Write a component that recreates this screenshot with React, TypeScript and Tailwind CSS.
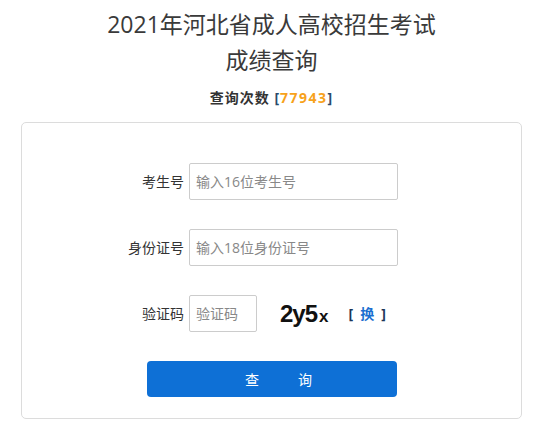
export default function App() {
  const font = { fontFamily: '"Open Sans","Noto Sans CJK SC",sans-serif' };
  return (
    <div className="w-[543px] h-[438px] bg-white text-[#333]" style={font}>
      <div className="pt-[6px] text-center text-[23px] leading-[36px] text-[#3a3a3a]">
        <div>2021年河北省成人高校招生考试</div>
        <div>成绩查询</div>
      </div>
      <div className="mt-[10px] text-center text-[14px] leading-[20px] font-bold text-[#333] tracking-[1px]">
        查询次数 <span className="text-[#2b4a6b]">[</span>
        <span className="text-[#f7a21b] tracking-[1.5px]">77943</span>
        <span className="text-[#2b4a6b]">]</span>
      </div>
      <div className="mx-[21px] mt-[14px] h-[297px] border border-[#dcdcdc] rounded-[5px] pt-[40px]">
        <div className="flex items-center">
          <div className="w-[167px] pr-[5px] text-right text-[14px]">考生号</div>
          <div className="w-[209px] h-[37px] border border-[#ccc] rounded-[2px] flex items-center pl-[6px] text-[14px] text-[#888]">输入16位考生号</div>
        </div>
        <div className="flex items-center mt-[29px]">
          <div className="w-[167px] pr-[5px] text-right text-[14px]">身份证号</div>
          <div className="w-[209px] h-[37px] border border-[#ccc] rounded-[2px] flex items-center pl-[6px] text-[14px] text-[#888]">输入18位身份证号</div>
        </div>
        <div className="flex items-center mt-[29px]">
          <div className="w-[167px] pr-[5px] text-right text-[14px]">验证码</div>
          <div className="w-[68px] h-[37px] border border-[#ccc] rounded-[2px] flex items-center pl-[6px] text-[14px] text-[#888]">验证码</div>
          <div className="ml-[23px] font-bold text-[#111] leading-none tracking-[-1px]" style={{ fontFamily: '"Liberation Sans",sans-serif' }}>
            <span className="text-[24px]">2y5</span>
            <span className="text-[17px] ml-[2px]">x</span>
          </div>
          <div className="ml-[21px] flex items-center text-[14px] font-bold text-[#1d3557]">
            <span>[</span>
            <span className="ml-[7px] text-[#1a6fd0]">换</span>
            <span className="ml-[7px]">]</span>
          </div>
        </div>
        <div className="mt-[29px] ml-[125px] w-[250px] h-[36px] bg-[#0e70d6] rounded-[4px] flex items-center justify-center pl-[13px] text-white text-[14px]">
          <span>查</span>
          <span className="ml-[39px]">询</span>
        </div>
      </div>
    </div>
  );
}
